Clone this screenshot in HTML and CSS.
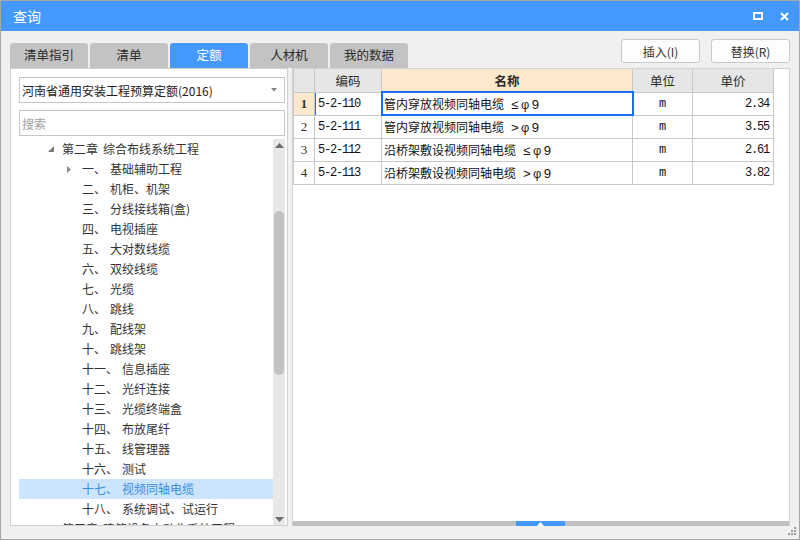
FILE: index.html
```html
<!DOCTYPE html>
<html lang="zh-CN">
<head>
<meta charset="utf-8">
<title>查询</title>
<link rel="stylesheet" href="styles.css">
</head>
<body>
<div class="window">
  <div class="titlebar">
    <span class="title">查询</span>
    <div class="win-ctrls">
      <svg width="10" height="8" viewBox="0 0 10 8"><rect x="1" y="1" width="8" height="6" fill="none" stroke="#fff" stroke-width="2"/></svg>
      <svg width="9" height="9" viewBox="0 0 9 9"><path d="M1 1L8 8M8 1L1 8" stroke="#fff" stroke-width="2"/></svg>
    </div>
  </div>
  <div class="body">
    <div class="toolbar">
      <div class="tabs">
        <div class="tab">清单指引</div>
        <div class="tab">清单</div>
        <div class="tab active">定额</div>
        <div class="tab">人材机</div>
        <div class="tab">我的数据</div>
      </div>
      <div class="actions">
        <button class="btn">插入(I)</button>
        <button class="btn">替换(R)</button>
      </div>
    </div>
    <div class="content">
      <div class="left-panel">
        <div class="select">
          <span>河南省通用安装工程预算定额(2016)</span>
          <svg width="6" height="4" viewBox="0 0 6 4"><path d="M0 0H6L3 3.5Z" fill="#858585"/></svg>
        </div>
        <div class="search">搜索</div>
        <div class="tree-wrap">
          <ul class="tree">
            <li class="node l1"><span class="tw"><svg width="6" height="6" viewBox="0 0 6 6"><path d="M6 0V6H0Z" fill="#7a7a7a"/></svg></span><span>第二章</span><span>综合布线系统工程</span></li>
            <li class="node l2"><span class="tw"><svg width="4" height="7" viewBox="0 0 4 7"><path d="M0 0L4 3.5L0 7Z" fill="#8c8c8c"/></svg></span><span>一、</span><span>基础辅助工程</span></li>
            <li class="node l2"><span class="tw"></span><span>二、</span><span>机柜、机架</span></li>
            <li class="node l2"><span class="tw"></span><span>三、</span><span>分线接线箱(盒)</span></li>
            <li class="node l2"><span class="tw"></span><span>四、</span><span>电视插座</span></li>
            <li class="node l2"><span class="tw"></span><span>五、</span><span>大对数线缆</span></li>
            <li class="node l2"><span class="tw"></span><span>六、</span><span>双绞线缆</span></li>
            <li class="node l2"><span class="tw"></span><span>七、</span><span>光缆</span></li>
            <li class="node l2"><span class="tw"></span><span>八、</span><span>跳线</span></li>
            <li class="node l2"><span class="tw"></span><span>九、</span><span>配线架</span></li>
            <li class="node l2"><span class="tw"></span><span>十、</span><span>跳线架</span></li>
            <li class="node l2"><span class="tw"></span><span>十一、</span><span>信息插座</span></li>
            <li class="node l2"><span class="tw"></span><span>十二、</span><span>光纤连接</span></li>
            <li class="node l2"><span class="tw"></span><span>十三、</span><span>光缆终端盒</span></li>
            <li class="node l2"><span class="tw"></span><span>十四、</span><span>布放尾纤</span></li>
            <li class="node l2"><span class="tw"></span><span>十五、</span><span>线管理器</span></li>
            <li class="node l2"><span class="tw"></span><span>十六、</span><span>测试</span></li>
            <li class="node l2 selected"><span class="tw"></span><span>十七、</span><span>视频同轴电缆</span></li>
            <li class="node l2"><span class="tw"></span><span>十八、</span><span>系统调试、试运行</span></li>
            <li class="node l1"><span class="tw"><svg width="4" height="7" viewBox="0 0 4 7"><path d="M0 0L4 3.5L0 7Z" fill="#8c8c8c"/></svg></span><span>第三章</span><span>建筑设备自动化系统工程</span></li>
          </ul>
          <div class="vscroll">
            <div class="sarrow"><svg width="9" height="5" viewBox="0 0 9 5"><path d="M0 5L4.5 0L9 5Z" fill="#6e6e6e"/></svg></div>
            <div class="strack"><div class="sthumb"></div></div>
            <div class="sarrow"><svg width="9" height="5" viewBox="0 0 9 5"><path d="M0 0L4.5 5L9 0Z" fill="#6e6e6e"/></svg></div>
          </div>
        </div>
      </div>
      <div class="right-panel">
        <div class="grid-area">
          <table class="grid">
            <colgroup>
              <col class="c-no"><col class="c-code"><col class="c-name"><col class="c-unit"><col class="c-price">
            </colgroup>
            <thead>
              <tr><th></th><th>编码</th><th class="sorted">名称</th><th>单位</th><th>单价</th></tr>
            </thead>
            <tbody>
              <tr class="current">
                <td class="no">1</td><td class="code mark">5-2-110</td><td class="name focus">管内穿放视频同轴电缆<span class="sym">≤φ9</span></td><td class="unit">m</td><td class="price">2.34</td>
              </tr>
              <tr>
                <td class="no">2</td><td class="code">5-2-111</td><td class="name">管内穿放视频同轴电缆<span class="sym">&gt;φ9</span></td><td class="unit">m</td><td class="price">3.55</td>
              </tr>
              <tr>
                <td class="no">3</td><td class="code">5-2-112</td><td class="name">沿桥架敷设视频同轴电缆<span class="sym">≤φ9</span></td><td class="unit">m</td><td class="price">2.61</td>
              </tr>
              <tr>
                <td class="no">4</td><td class="code">5-2-113</td><td class="name">沿桥架敷设视频同轴电缆<span class="sym">&gt;φ9</span></td><td class="unit">m</td><td class="price">3.82</td>
              </tr>
            </tbody>
          </table>
        </div>
        <div class="hscroll">
          <div class="hthumb"><svg width="7" height="4" viewBox="0 0 7 4"><path d="M0 4H7L3.5 0Z" fill="#fff"/></svg></div>
        </div>
      </div>
    </div>
  </div>
  <svg class="grip" width="9" height="9" viewBox="0 0 9 9">
    <rect x="6" y="0" width="2" height="2" fill="#9c9c9c"/>
    <rect x="3" y="3" width="2" height="2" fill="#9c9c9c"/>
    <rect x="6" y="3" width="2" height="2" fill="#9c9c9c"/>
    <rect x="0" y="6" width="2" height="2" fill="#9c9c9c"/>
    <rect x="3" y="6" width="2" height="2" fill="#9c9c9c"/>
    <rect x="6" y="6" width="2" height="2" fill="#9c9c9c"/>
  </svg>
</div>
</body>
</html>
```
FILE: styles.css
```css
* { box-sizing: border-box; }
html, body { margin: 0; padding: 0; }
body {
  width: 800px;
  height: 540px;
  overflow: hidden;
  font-family: "Noto Sans CJK SC", "Noto Sans", sans-serif;
  font-size: 12px;
  color: #333;
  background: #f0f0f0;
}
.window {
  position: relative;
  width: 800px;
  height: 540px;
  border: 1px solid #a6a6a6;
  background: #f0f0f0;
  display: flex;
  flex-direction: column;
}
.titlebar {
  height: 30px;
  flex: none;
  background: #4499ff;
  color: #fff;
  display: flex;
  align-items: center;
  padding: 0 10px 0 12px;
}
.title { flex: 1; font-size: 14px; }
.win-ctrls { display: flex; align-items: center; gap: 17px; }
.win-ctrls svg { display: block; }

.body {
  flex: 1;
  min-height: 0;
  display: flex;
  flex-direction: column;
  padding: 0 9px 13px 9px;
}
.toolbar {
  height: 37px;
  flex: none;
  display: flex;
  justify-content: space-between;
}
.tabs { display: flex; gap: 2px; align-self: flex-end; }
.tab {
  width: 78px;
  height: 25px;
  background: #c3c3c3;
  border-radius: 3px 3px 0 0;
  display: flex;
  align-items: center;
  justify-content: center;
  color: #2b2b2b;
  font-size: 12.5px;
  line-height: 1;
}
.tab.active { background: #4499ff; color: #fff; }
.actions { display: flex; gap: 11px; margin-top: 8px; height: 24px; }
.btn {
  width: 79px;
  height: 24px;
  padding: 0;
  background: #fdfdfd;
  border: 1px solid #c9c9c9;
  border-radius: 3px;
  font-family: inherit;
  font-size: 12px;
  color: #333;
}

.content { flex: 1; min-height: 0; display: flex; gap: 4px; }

.left-panel {
  width: 278px;
  flex: none;
  background: #fff;
  border: 1px solid #d0d0d0;
  display: flex;
  flex-direction: column;
  padding: 8px 2px 0 8px;
}
.select {
  height: 26px;
  flex: none;
  border: 1px solid #c6c6c6;
  display: flex;
  align-items: center;
  justify-content: space-between;
  padding: 0 7px 0 2px;
  color: #222;
}
.select svg { display: block; }
.search {
  height: 26px;
  flex: none;
  margin-top: 7px;
  border: 1px solid #c6c6c6;
  display: flex;
  align-items: center;
  padding: 0 2px;
  color: #a0a0a0;
}
.tree-wrap {
  flex: 1;
  min-height: 0;
  margin-top: 3px;
  display: flex;
  overflow: hidden;
}
.tree {
  list-style: none;
  margin: 0;
  padding: 0;
  width: 254px;
  flex: none;
  overflow: hidden;
}
.node {
  height: 20px;
  display: flex;
  align-items: center;
  white-space: nowrap;
  color: #333;
  line-height: 20px;
}
.node.l1 { padding-left: 29px; gap: 5px; }
.node.l1 .tw { width: 9px; }
.node.l2 { padding-left: 48px; gap: 4px; }
.node.l2 .tw { width: 11px; }
.tw { display: flex; align-items: center; height: 20px; flex: none; }
.tw svg { display: block; }
.node.selected { background: #cce5fc; color: #3a8be3; }

.vscroll {
  width: 12px;
  flex: none;
  background: #e8e8e8;
  display: flex;
  flex-direction: column;
}
.sarrow {
  height: 12px;
  flex: none;
  display: flex;
  align-items: center;
  justify-content: center;
}
.sarrow svg { display: block; }
.strack { flex: 1; padding: 60px 1px 0 1px; }
.sthumb { height: 164px; background: #c2c2c2; border-radius: 5px; }

.right-panel {
  flex: 1;
  min-width: 0;
  display: flex;
  flex-direction: column;
  border: 1px solid #d2d2d2;
  border-bottom: none;
  background: #fff;
}
.grid-area { flex: 1; min-height: 0; background: #fff; overflow: hidden; }
.grid {
  table-layout: fixed;
  border-collapse: collapse;
  width: 481px;
}
.c-no { width: 21px; }
.c-code { width: 67px; }
.c-name { width: 251px; }
.c-unit { width: 60px; }
.c-price { width: 81px; }
.grid th, .grid td {
  border: 1px solid #c8c8c8;
  height: 23px;
  padding: 0;
  white-space: nowrap;
  overflow: hidden;
}
.grid thead th { border-top: none; }
.grid th {
  background: #e6e6e6;
  font-weight: normal;
  font-size: 12.5px;
  text-align: center;
  color: #2b2b2b;
}
.grid th.sorted { background: #fde8cb; font-weight: bold; }
.grid td.no {
  font-family: "Liberation Serif", serif;
  font-size: 13px;
  text-align: center;
  color: #333;
}
.grid tr.current td.no { background: #fde8cb; font-weight: bold; }
.grid td.code {
  font-family: "Liberation Mono", monospace;
  font-size: 12px;
  letter-spacing: -1.2px;
  padding-left: 3px;
  color: #111;
}
.grid td.mark { box-shadow: inset 1px 0 0 #1a6ff0; }
.grid td.name { padding-left: 2px; color: #111; }
.grid td.focus { outline: 2px solid #1a6ff0; outline-offset: -1px; }
.sym {
  font-family: "Liberation Mono", monospace;
  font-size: 13px;
  letter-spacing: 2.5px;
  margin-left: 7px;
}
.grid td.unit {
  font-family: "Liberation Mono", monospace;
  font-size: 12px;
  text-align: center;
  color: #111;
}
.grid td.price {
  font-family: "Liberation Mono", monospace;
  font-size: 12px;
  letter-spacing: -1.2px;
  text-align: right;
  padding-right: 4px;
  color: #111;
}

.hscroll { height: 5px; flex: none; background: #c0c0c0; display: flex; }
.hthumb {
  width: 49px;
  margin-left: 223px;
  background: #4499ff;
  display: flex;
  align-items: flex-end;
  justify-content: center;
}
.hthumb svg { display: block; }

.grip { position: absolute; right: 2px; bottom: 3px; display: block; }
```
